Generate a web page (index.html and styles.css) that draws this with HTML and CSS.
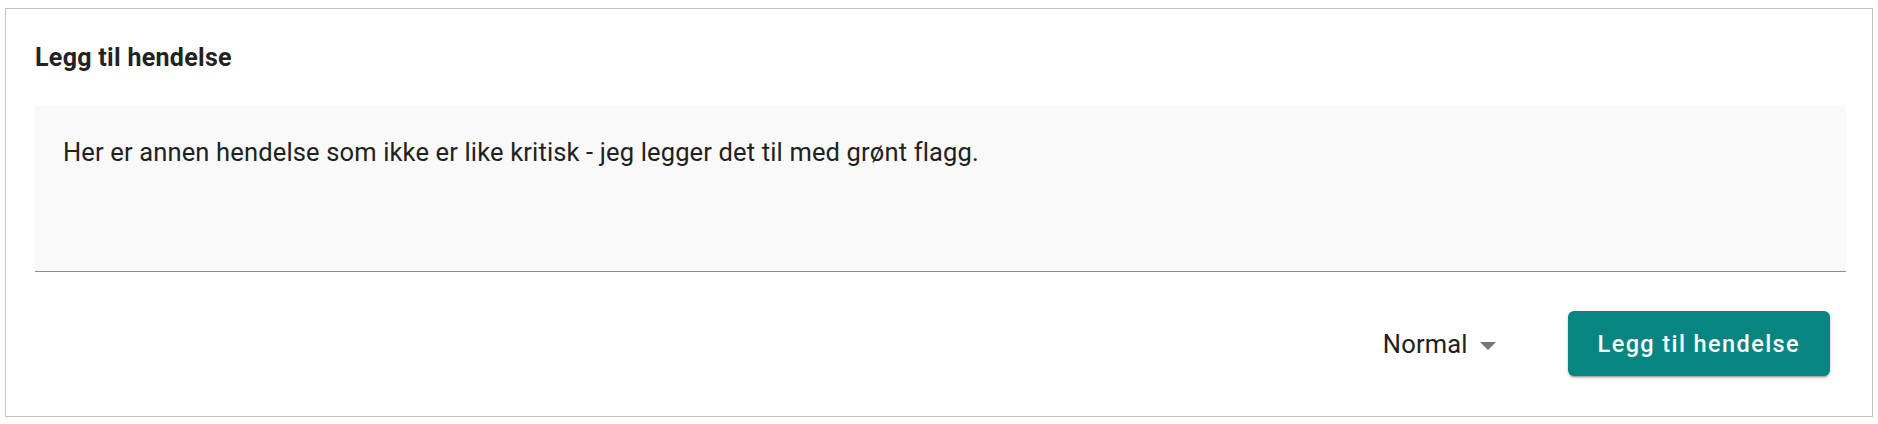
FILE: index.html
```html
<!DOCTYPE html>
<html lang="no">
<head>
    <meta charset="UTF-8">
    <meta name="viewport" content="width=device-width, initial-scale=1.0">
    <title>Legg til hendelse</title>
    <link rel="stylesheet" href="styles.css">
</head>
<body>
    <!-- Skjema for ny hendelse -->
    <div class="card">
        <h2 class="card-title">Legg til hendelse</h2>

        <textarea class="event-text" id="hendelseTekst" rows="3">Her er annen hendelse som ikke er like kritisk - jeg legger det til med grønt flagg.</textarea>

        <div class="card-actions">
            <div class="priority-select" id="prioritet">
                <span class="priority-value">Normal</span>
                <svg class="priority-arrow" width="16" height="8" viewBox="0 0 16 8">
                    <polygon points="0,0 16,0 8,8" fill="#757575"/>
                </svg>
            </div>
            <button type="button" class="add-button" id="leggTilButton">Legg til hendelse</button>
        </div>
    </div>
</body>
</html>
```

FILE: styles.css
```css
body {
    font-family: Roboto, "Liberation Sans", Arial, sans-serif;
    background-color: #fff;
    margin: 0;
    padding: 8px 5px 0 5px;
    color: #212121;
}
.card {
    border: 1px solid #c2c2c2;
    padding: 35px 26px 40px 29px;
    box-sizing: border-box;
    width: 100%;
}
.card-title {
    font-size: 25px;
    line-height: 28px;
    font-weight: 700;
    letter-spacing: 0.3px;
    margin: 0 0 34px 0;
    color: #222;
}
.event-text {
    display: block;
    width: 100%;
    height: 166px;
    box-sizing: border-box;
    padding: 31px 28px 0 28px;
    margin: 0;
    border: none;
    border-bottom: 1px solid #8f8f8f;
    background-color: #f9f9f9;
    font-family: inherit;
    font-size: 25.5px;
    line-height: 30px;
    letter-spacing: 0.15px;
    color: #212121;
    resize: none;
    overflow: hidden;
    outline: none;
}
.card-actions {
    display: flex;
    justify-content: flex-end;
    align-items: center;
    margin-top: 39px;
    padding-right: 16px;
}
.priority-select {
    display: flex;
    align-items: center;
    gap: 12px;
    margin-right: 72px;
    font-size: 25.5px;
    line-height: 30px;
    letter-spacing: 0.15px;
    cursor: pointer;
}
.priority-arrow {
    display: block;
    margin-top: 4px;
}
.add-button {
    font-family: inherit;
    font-size: 23.5px;
    font-weight: 500;
    letter-spacing: 1.4px;
    height: 65px;
    padding: 0 30px;
    border: none;
    border-radius: 6px;
    background-color: #078581;
    color: #fff;
    cursor: pointer;
    box-shadow: 0 3px 1px -2px rgba(0, 0, 0, 0.2), 0 2px 2px 0 rgba(0, 0, 0, 0.14), 0 1px 5px 0 rgba(0, 0, 0, 0.12);
}
```
